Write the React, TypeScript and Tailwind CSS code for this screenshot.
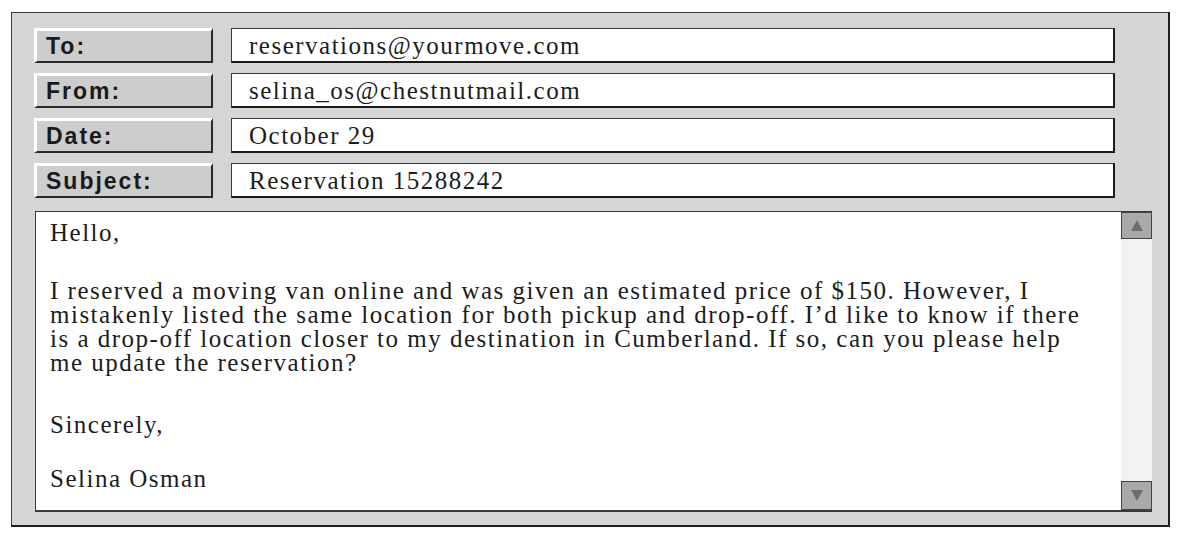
import React from "react";

const fields = [
  { label: "To:", value: "reservations@yourmove.com" },
  { label: "From:", value: "selina_os@chestnutmail.com" },
  { label: "Date:", value: "October 29" },
  { label: "Subject:", value: "Reservation 15288242" },
];

function Arrow({ up }: { up?: boolean }) {
  return (
    <svg width="12" height="11" viewBox="0 0 12 11" className="block">
      {up ? <path d="M6 0 L12 11 L0 11 Z" fill="#6e6e6e" /> : <path d="M0 0 L12 0 L6 11 Z" fill="#6e6e6e" />}
    </svg>
  );
}

export default function App() {
  const serif = { fontFamily: '"Liberation Serif", "Times New Roman", serif' };

  return (
    <div className="w-[1187px] h-[542px] bg-white pt-[12px] pl-[11px]">
      <div className="w-[1159px] h-[515px] bg-[#d5d5d5] border border-[#3a3a3a] border-r-2 border-b-2 border-r-[#1e1e1e] border-b-[#1e1e1e] pl-[22px] pt-[15px]">
        {/* header fields */}
        <div className="flex flex-col gap-[10px]">
          {fields.map((f) => (
            <div key={f.label} className="flex items-stretch gap-[18px] h-[35px]">
              <div className="w-[179px] bg-[#cdcdcd] border-t-[3px] border-l-[3px] border-t-white border-l-white border-r-2 border-b-2 border-r-[#2a2a2a] border-b-[#2a2a2a] flex items-center pl-[9px]">
                <span className="font-['Liberation_Sans',Arial,sans-serif] font-bold text-[23px] tracking-[2px] text-[#1a1a1a] leading-none">
                  {f.label}
                </span>
              </div>
              <div className="w-[884px] bg-white border border-[#3a3a3a] border-r-2 border-b-2 border-r-[#1a1a1a] border-b-[#1a1a1a] flex items-center pl-[17px]">
                <span style={serif} className="text-[25px] tracking-[1.5px] text-[#1c1c1c] leading-none">
                  {f.value}
                </span>
              </div>
            </div>
          ))}
        </div>

        {/* message body */}
        <div className="mt-[13px] ml-[1px] w-[1117px] h-[301px] flex bg-white border-t border-l border-b-2 border-[#3a3a3a]">
          <div style={serif} className="flex-1 pl-[14px] pt-[9px] text-[25px] leading-[24px] tracking-[1.5px] text-[#1c1c1c]">
            <p>Hello,</p>
            <p className="mt-[34px]">
              I reserved a moving van online and was given an estimated price of $150. However, I
              <br />
              mistakenly listed the same location for both pickup and drop-off. I’d like to know if there
              <br />
              is a drop-off location closer to my destination in Cumberland. If so, can you please help
              <br />
              me update the reservation?
            </p>
            <p className="mt-[38px]">Sincerely,</p>
            <p className="mt-[30px]">Selina Osman</p>
          </div>
          <div className="w-[31px] bg-[#f2f2f2] flex flex-col justify-between">
            <div className="h-[27px] bg-[#a9a9a9] border border-[#444] flex items-center justify-center">
              <Arrow up />
            </div>
            <div className="h-[29px] bg-[#a9a9a9] border border-[#444] flex items-center justify-center">
              <Arrow />
            </div>
          </div>
        </div>
      </div>
    </div>
  );
}
